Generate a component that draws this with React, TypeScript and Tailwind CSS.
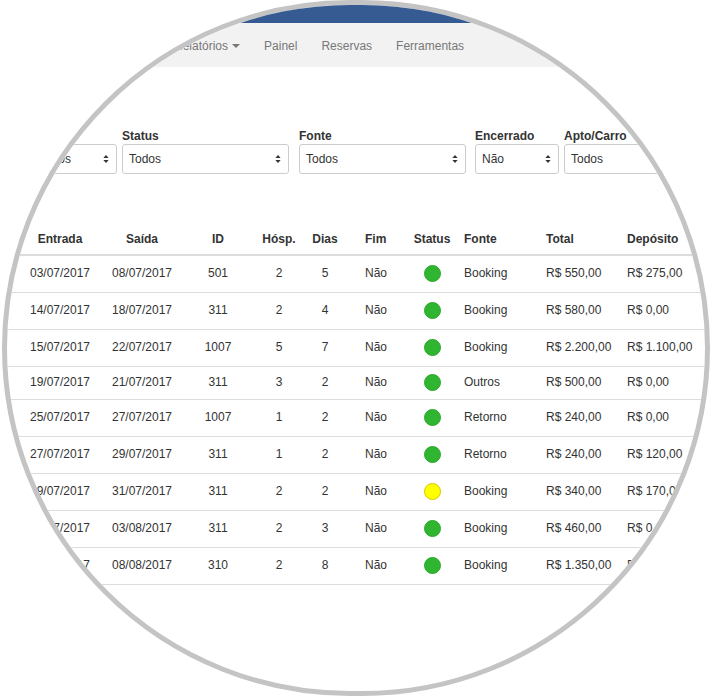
import React from "react";

type Row = {
  entrada: string;
  saida: string;
  id: string;
  hosp: string;
  dias: string;
  fim: string;
  status: "ok" | "pendente";
  fonte: string;
  total: string;
  deposito: string;
  h: string;
};

const rows: Row[] = [
  { entrada: "03/07/2017", saida: "08/07/2017", id: "501", hosp: "2", dias: "5", fim: "Não", status: "ok", fonte: "Booking", total: "R$ 550,00", deposito: "R$ 275,00", h: "h-[37px]" },
  { entrada: "14/07/2017", saida: "18/07/2017", id: "311", hosp: "2", dias: "4", fim: "Não", status: "ok", fonte: "Booking", total: "R$ 580,00", deposito: "R$ 0,00", h: "h-[37px]" },
  { entrada: "15/07/2017", saida: "22/07/2017", id: "1007", hosp: "5", dias: "7", fim: "Não", status: "ok", fonte: "Booking", total: "R$ 2.200,00", deposito: "R$ 1.100,00", h: "h-[37px]" },
  { entrada: "19/07/2017", saida: "21/07/2017", id: "311", hosp: "3", dias: "2", fim: "Não", status: "ok", fonte: "Outros", total: "R$ 500,00", deposito: "R$ 0,00", h: "h-[33px]" },
  { entrada: "25/07/2017", saida: "27/07/2017", id: "1007", hosp: "1", dias: "2", fim: "Não", status: "ok", fonte: "Retorno", total: "R$ 240,00", deposito: "R$ 0,00", h: "h-[37px]" },
  { entrada: "27/07/2017", saida: "29/07/2017", id: "311", hosp: "1", dias: "2", fim: "Não", status: "ok", fonte: "Retorno", total: "R$ 240,00", deposito: "R$ 120,00", h: "h-[37px]" },
  { entrada: "29/07/2017", saida: "31/07/2017", id: "311", hosp: "2", dias: "2", fim: "Não", status: "pendente", fonte: "Booking", total: "R$ 340,00", deposito: "R$ 170,00", h: "h-[37px]" },
  { entrada: "31/07/2017", saida: "03/08/2017", id: "311", hosp: "2", dias: "3", fim: "Não", status: "ok", fonte: "Booking", total: "R$ 460,00", deposito: "R$ 0,00", h: "h-[37px]" },
  { entrada: "31/07/2017", saida: "08/08/2017", id: "310", hosp: "2", dias: "8", fim: "Não", status: "ok", fonte: "Booking", total: "R$ 1.350,00", deposito: "R$ 675,00", h: "h-[37px]" },
];

// column widths follow the original table (page pixels)
const cols = {
  pre: "w-[20px]",
  entrada: "w-[80px] text-center",
  saida: "w-[84px] text-center",
  id: "w-[68px] text-center",
  hosp: "w-[54px] text-center",
  dias: "w-[38px] text-center",
  fim: "w-[60px] pl-[21px]",
  status: "w-[56px] flex justify-center",
  fonte: "w-[78px] pl-[4px]",
  total: "w-[81px] pl-[8px]",
  deposito: "w-[95px] pl-[8px]",
};

const SelectArrows = () => (
  <svg width="6" height="10" viewBox="0 0 6 10" className="shrink-0">
    <path d="M3 1 L5.6 4 L0.4 4 Z" fill="#333" />
    <path d="M3 9 L5.6 6 L0.4 6 Z" fill="#333" />
  </svg>
);

const Filter = ({ label, value, width, margin }: { label: string; value: string; width: string; margin: string }) => (
  <div className={`flex flex-col shrink-0 ${width} ${margin}`}>
    <span className="text-[12px] leading-[15px] font-bold text-[#333] whitespace-nowrap">{label}</span>
    <div className="h-[30px] border border-[#ccc] rounded-[3px] bg-white flex items-center justify-between pl-[6px] pr-[7px]">
      <span className="text-[12px] text-[#333]">{value}</span>
      <SelectArrows />
    </div>
  </div>
);

const StatusDot = ({ status }: { status: Row["status"] }) =>
  status === "ok" ? (
    <span className="block w-[17px] h-[17px] rounded-full bg-[#2fb52f] border border-[#29a829]" />
  ) : (
    <span className="block w-[17px] h-[17px] rounded-full bg-[#ffff00] border border-[#d6c600]" />
  );

export default function App() {
  return (
    <div
      className="w-[714px] h-[697px] bg-white overflow-hidden"
      style={{ fontFamily: '"Liberation Sans", Arial, Helvetica, sans-serif' }}
    >
      <div className="ml-[2px] w-[708px] h-[696px] rounded-full border-[5px] border-[#c4c4c4] overflow-hidden">
        <div className="-ml-[7px] -mt-[5px] w-[714px]">
          {/* top bar */}
          <div className="h-[23px] bg-[#365a92]" />
          {/* nav */}
          <div className="h-[44px] bg-[#f2f2f2] flex items-center pt-[2px] pl-[162px] text-[12px] text-[#777]">
            <div className="px-[12px] flex items-center">
              <span>Relatórios</span>
              <span className="ml-[4px] w-0 h-0 border-x-[4px] border-x-transparent border-t-[4px] border-t-[#777]" />
            </div>
            <div className="px-[12px]">Painel</div>
            <div className="px-[12px]">Reservas</div>
            <div className="px-[12px]">Ferramentas</div>
          </div>

          {/* filters */}
          <div className="flex mt-[62px] pl-[32px]">
            <Filter label="Tipo" value="Todos" width="w-[85px]" margin="" />
            <Filter label="Status" value="Todos" width="w-[167px]" margin="ml-[5px]" />
            <Filter label="Fonte" value="Todos" width="w-[167px]" margin="ml-[10px]" />
            <Filter label="Encerrado" value="Não" width="w-[84px]" margin="ml-[9px]" />
            <Filter label="Apto/Carro" value="Todos" width="w-[167px]" margin="ml-[5px]" />
          </div>

          {/* table */}
          <div className="mt-[48px] text-[12px] text-[#333]">
            <div className="flex items-center h-[34px] pt-[2px] border-b-2 border-[#ddd] font-bold">
              <div className={cols.pre} />
              <div className={cols.entrada}>Entrada</div>
              <div className={cols.saida}>Saída</div>
              <div className={cols.id}>ID</div>
              <div className={cols.hosp}>Hósp.</div>
              <div className={cols.dias}>Dias</div>
              <div className={cols.fim}>Fim</div>
              <div className={cols.status}>Status</div>
              <div className={cols.fonte}>Fonte</div>
              <div className={cols.total}>Total</div>
              <div className={cols.deposito}>Depósito</div>
            </div>
            {rows.map((r, i) => (
              <div key={i} className={`flex items-center ${r.h} pb-[2px] border-b border-[#ddd] whitespace-nowrap`}>
                <div className={cols.pre} />
                <div className={cols.entrada}>{r.entrada}</div>
                <div className={cols.saida}>{r.saida}</div>
                <div className={cols.id}>{r.id}</div>
                <div className={cols.hosp}>{r.hosp}</div>
                <div className={cols.dias}>{r.dias}</div>
                <div className={cols.fim}>{r.fim}</div>
                <div className={cols.status}>
                  <StatusDot status={r.status} />
                </div>
                <div className={cols.fonte}>{r.fonte}</div>
                <div className={cols.total}>{r.total}</div>
                <div className={cols.deposito}>{r.deposito}</div>
              </div>
            ))}
          </div>
        </div>
      </div>
    </div>
  );
}
